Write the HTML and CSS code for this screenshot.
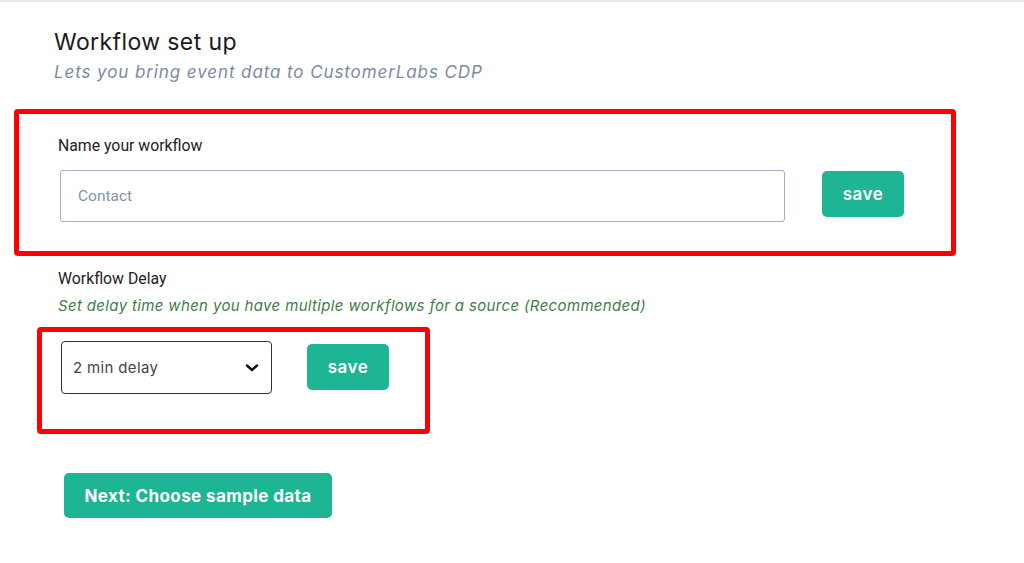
FILE: index.html
```html
<!DOCTYPE html>
<html lang="en">
	<head>
		<meta charset="utf-8" />
		<title>Workflow set up</title>
		<meta name="viewport" content="width=device-width, initial-scale=1.0">
		<link rel="stylesheet" href="styles.css">
	</head>
	<body>
		<div id="main">
			<div class="head">
				<h1>Workflow set up</h1>
				<p class="sub">Lets you bring event data to CustomerLabs CDP</p>
			</div>

			<div class="mark name-box">
				<div class="label">Name your workflow</div>
				<div class="row">
					<input type="text" class="text-input" placeholder="Contact" />
					<div class="btn save">save</div>
				</div>
			</div>

			<div class="delay">
				<div class="label">Workflow Delay</div>
				<p class="hint">Set delay time when you have multiple workflows for a source (Recommended)</p>
			</div>

			<div class="mark delay-box">
				<div class="select">
					<span>2 min delay</span>
					<svg width="14" height="10" viewBox="0 0 14 10"><path d="M2 2.5 L7 7 L12 2.5" fill="none" stroke="#111" stroke-width="2.4" stroke-linecap="round" stroke-linejoin="round"/></svg>
				</div>
				<div class="btn save">save</div>
			</div>

			<div class="btn next">Next: Choose sample data</div>
		</div>
	</body>
</html>
```

FILE: styles.css
```css
body, html {
	margin:0;
	padding:0;
	background:#fff;
	font-family:"Inter", "Open Sans", sans-serif;
}
#main {
	border-top:2px solid #e8e8e8;
	padding-top:26px;
}
.head {
	padding-left:54px;
}
h1 {
	margin:0;
	font-size:23px;
	font-weight:400;
	letter-spacing:0.4px;
	line-height:28px;
	color:#1a1a1a;
}
.sub {
	margin:5px 0 0 0;
	font-size:17px;
	font-style:italic;
	letter-spacing:0.9px;
	line-height:22px;
	color:#7a8ca2;
}
.mark {
	border:5px solid #ff0000;
	border-radius:4px;
	box-sizing:border-box;
}
.label {
	font-family:"Roboto", sans-serif;
	font-size:15.8px;
	line-height:19px;
	color:#222;
}
.name-box {
	width:942px;
	height:147px;
	margin:26px 0 0 14px;
	padding:22px 0 0 39px;
}
.row {
	display:flex;
	align-items:flex-start;
	gap:37px;
	margin-top:15px;
	padding-left:2px;
}
.text-input {
	width:725px;
	height:52px;
	box-sizing:border-box;
	border:1px solid #9fb0c4;
	border-radius:3px;
	padding:0 17px;
	font-family:"Roboto", sans-serif;
	font-size:15.5px;
	outline:none;
}
.text-input::placeholder {
	color:#8594a4;
}
.btn {
	background-color:#1db594;
	color:#fff;
	border-radius:5px;
	font-weight:600;
	font-size:17px;
	letter-spacing:0.5px;
	display:flex;
	align-items:center;
	justify-content:center;
	box-sizing:border-box;
	cursor:pointer;
}
.save {
	width:82px;
	height:46px;
	margin-top:1px;
}
.delay {
	padding:13px 0 0 58px;
}
.hint {
	margin:8px 0 0 0;
	font-size:15px;
	font-style:italic;
	letter-spacing:0.35px;
	line-height:20px;
	color:#3f7d45;
}
.delay-box {
	display:flex;
	gap:35px;
	width:393px;
	height:107px;
	margin:11px 0 0 37px;
	padding:9px 0 0 19px;
}
.select {
	width:211px;
	height:53px;
	box-sizing:border-box;
	border:1px solid #333;
	border-radius:4px;
	display:flex;
	align-items:center;
	justify-content:space-between;
	padding:0 12px 0 11px;
	font-size:15px;
	letter-spacing:0.35px;
	color:#444;
}
.delay-box .save {
	margin-top:3px;
}
.next {
	width:268px;
	height:45px;
	margin:39px 0 0 64px;
	font-weight:700;
	letter-spacing:0.4px;
}
```
